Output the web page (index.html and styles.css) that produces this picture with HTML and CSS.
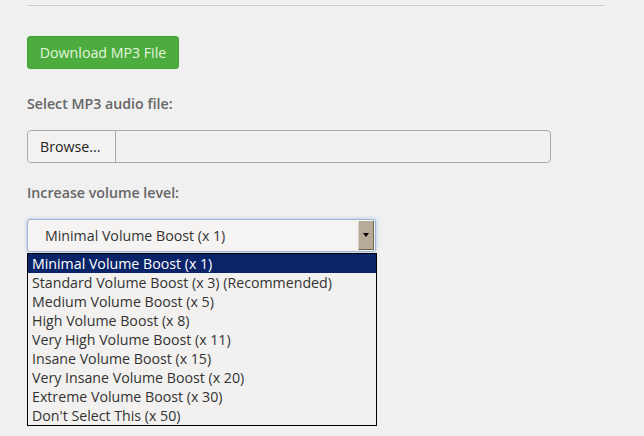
FILE: index.html
```html
<!DOCTYPE html>
<html>
<head>
<meta charset="utf-8">
<link rel="stylesheet" href="styles.css">
</head>
<body>
<div class="page">
  <div class="rule"></div>
  <button class="download">Download MP3 File</button>
  <div class="label">Select MP3 audio file:</div>
  <div class="file">
    <span class="browse">Browse...</span>
    <span class="filename"></span>
  </div>
  <div class="label label2">Increase volume level:</div>
  <div class="select">
    <span class="value">Minimal Volume Boost (x 1)</span>
    <span class="arrow"><span class="tri"></span></span>
  </div>
  <ul class="list">
    <li class="sel">Minimal Volume Boost (x 1)</li>
    <li>Standard Volume Boost (x 3) (Recommended)</li>
    <li>Medium Volume Boost (x 5)</li>
    <li>High Volume Boost (x 8)</li>
    <li>Very High Volume Boost (x 11)</li>
    <li>Insane Volume Boost (x 15)</li>
    <li>Very Insane Volume Boost (x 20)</li>
    <li>Extreme Volume Boost (x 30)</li>
    <li>Don't Select This (x 50)</li>
  </ul>
</div>
</body>
</html>
```
FILE: styles.css
```css
html, body {
  margin: 0;
  padding: 0;
  background: #f0f0f0;
}
body {
  font-family: "Open Sans", "Liberation Sans", sans-serif;
  font-size: 14.2px;
  color: #333;
}
.page {
  padding: 5px 0 0 27px;
  width: 578px;
}
.rule {
  height: 0;
  border-top: 1px solid #cfcfcf;
  margin-bottom: 30px;
}
.download {
  display: block;
  width: 152px;
  height: 33px;
  background: #4cad3e;
  border: 1px solid #45a038;
  border-radius: 3px;
  color: #e6f4de;
  font-family: inherit;
  font-size: 14.2px;
  padding: 0;
  margin: 0;
}
.label {
  font-weight: 600;
  color: #666;
  line-height: 18px;
  margin-top: 26px;
}
.file {
  display: flex;
  width: 524px;
  height: 33px;
  box-sizing: border-box;
  border: 1px solid #aaa;
  border-radius: 4px;
  margin-top: 17px;
  background: #f2f1ef;
}
.browse {
  width: 88px;
  box-sizing: border-box;
  border-right: 1px solid #aaa;
  display: flex;
  align-items: center;
  padding-left: 12px;
  color: #222;
  background: #f3f2f0;
  border-radius: 4px 0 0 4px;
}
.filename { flex: 1; }
.label2 { margin-top: 21px; }
.select {
  display: flex;
  width: 349px;
  height: 33px;
  box-sizing: border-box;
  border: 1px solid #9fb4cf;
  border-radius: 3px;
  box-shadow: 0 0 4px #a8c6ea;
  margin-top: 17px;
  background: #f5f4f2;
  padding: 1px;
}
.value {
  flex: 1;
  display: flex;
  align-items: center;
  padding-left: 16px;
  color: #333;
}
.arrow {
  width: 14px;
  background: #b6aa98;
  border-left: 1px solid #d8d2c8;
  border-right: 1px solid #6f6555;
  border-bottom: 1px solid #6f6555;
  display: flex;
  align-items: center;
  justify-content: center;
}
.tri {
  width: 0;
  height: 0;
  border-left: 3px solid transparent;
  border-right: 3px solid transparent;
  border-top: 4px solid #000;
}
.list {
  list-style: none;
  margin: 1px 0 0 0;
  padding: 0;
  width: 350px;
  box-sizing: border-box;
  border: 1px solid #000;
  background: #f2f1ef;
}
.list li {
  height: 19px;
  line-height: 19px;
  padding-left: 4px;
  color: #333;
  white-space: nowrap;
}
.list li.sel {
  background: #0a246a;
  color: #fff;
}
```
